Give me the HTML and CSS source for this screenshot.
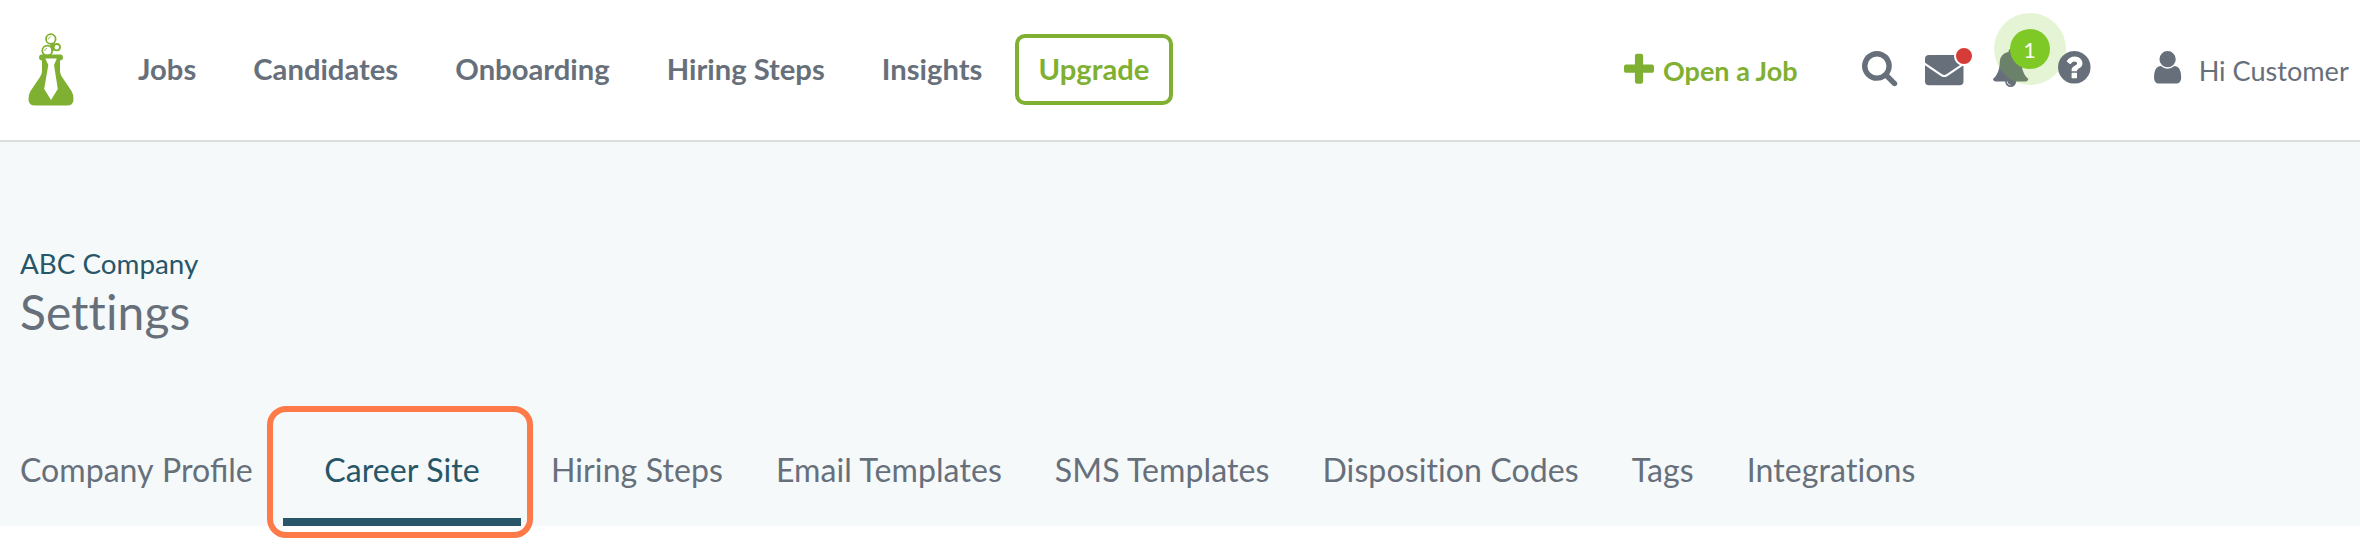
FILE: index.html
```html
<!DOCTYPE html>
<html lang="en">
<head>
<meta charset="utf-8">
<title>Settings</title>
<link rel="stylesheet" href="styles.css">
</head>
<body>
<header class="topbar">
  <svg class="logo" viewBox="0 0 46 73">
    <g fill="#fff" stroke="#80b032" stroke-width="1.8">
      <circle cx="28.8" cy="14.2" r="3.2"/>
      <circle cx="22.8" cy="6" r="4.8"/>
      <circle cx="19.3" cy="17.6" r="5"/>
    </g>
    <path fill="#80b032" d="M22 10.500L26.500 10L26 17L24 20L22.500 14Z"/>
    <path fill="none" stroke="#80b032" stroke-width=".8" d="M20.300 6.500Q20.600 4 22.800 3.600M16.700 18Q17 15.600 19 15.200"/>
    <path fill="#80b032" d="M13 21.500H33Q35 22 35 24.500T32 27.500V38Q32 41 34 44L43.500 58Q46 62 45.500 67Q45 72.500 39 72.500H7Q1 72.500 .5 67Q0 62 2.500 58L12 44Q14 41 14 38V27.500Q11 27 11 24.500T13 21.500Z"/>
    <path fill="#fff" d="M17.300 25.500H28.800L26 32L29.800 56L23 67L16.200 56L20.300 32Z"/>
  </svg>
  <nav class="mainnav">
    <a>Jobs</a><a>Candidates</a><a>Onboarding</a><a>Hiring Steps</a><a>Insights</a>
  </nav>
  <a class="upgrade">Upgrade</a>
  <a class="open-job">
    <svg class="plus" viewBox="192 192 1408 1408"><path d="M1600 736v192q0 40-28 68t-68 28h-416v416q0 40-28 68t-68 28h-192q-40 0-68-28t-28-68v-416h-416q-40 0-68-28t-28-68v-192q0-40 28-68t68-28h416v-416q0-40 28-68t68-28h192q40 0 68 28t28 68v416h416q40 0 68 28t28 68z"/></svg>
    <span>Open a Job</span>
  </a>
  <div class="icons">
    <svg class="search" viewBox="0 0 1664 1664"><path d="M1152 704q0-185-131.500-316.500t-316.500-131.500-316.500 131.500-131.500 316.500 131.500 316.500 316.500 131.500 316.500-131.500 131.500-316.500zm512 832q0 52-38 90t-90 38q-54 0-90-38l-343-342q-179 124-399 124-143 0-273.500-55.500t-225-150-150-225-55.500-273.500 55.500-273.500 150-225 225-150 273.500-55.500 273.500 55.500 225 150 150 225 55.500 273.500q0 220-124 399l343 343q37 37 37 90z"/></svg>
    <span class="mail">
      <svg viewBox="0 0 38.500 30.300"><rect width="38.500" height="30.300" rx="4"/><path d="M-.5 8.700L16.800 20.300Q19.250 21.700 21.700 20.300L39 8.700" fill="none" stroke="#fff" stroke-width="2.200"/></svg>
      <i class="dot"></i>
    </span>
    <span class="bell">
      <svg viewBox="64 0 1664 1792"><path d="M912 1696q0-16-16-16-59 0-101.500-42.500t-42.500-101.500q0-16-16-16t-16 16q0 73 51.500 124.500t124.500 51.500q16 0 16-16zm816-288q0 52-38 90t-90 38h-448q0 106-75 181t-181 75-181-75-75-181h-448q-52 0-90-38t-38-90q50-42 91-88t85-119.500 74.500-158.500 50-206 19.500-260q0-152 117-282.500t307-158.500q-8-19-8-39 0-40 28-68t68-28 68 28 28 68q0 20-8 39 190 28 307 158.500t117 282.500q0 139 19.500 260t50 206 74.500 158.500 85 119.500 91 88z"/></svg>
      <i class="halo"><b>1</b></i>
    </span>
    <svg class="help" viewBox="128 128 1536 1536"><path d="M1024 1376v-192q0-14-9-23t-23-9h-192q-14 0-23 9t-9 23v192q0 14 9 23t23 9h192q14 0 23-9t9-23zm256-672q0-88-55.500-163t-138.500-116-170-41q-243 0-371 213-15 24 8 42l132 100q7 6 19 6 16 0 25-12 53-68 86-92 34-24 86-24 48 0 85.500 26t37.500 59q0 38-20 61t-68 45q-63 28-115.500 86.500t-52.500 125.500v36q0 14 9 23t23 9h192q14 0 23-9t9-23q0-19 21.500-49.500t54.500-49.500q32-18 49-28.500t46-35 44.500-48 28-60.500 12.500-81zm384 192q0 209-103 385.500t-279.500 279.500-385.500 103-385.500-103-279.500-279.500-103-385.500 103-385.500 279.500-279.500 385.500-103 385.500 103 279.500 279.500 103 385.500z"/></svg>
  </div>
  <div class="account">
    <svg class="user" viewBox="256 128 1280 1536"><path d="M1536 1399q0 109-62.500 187t-150.500 78h-854q-88 0-150.500-78t-62.500-187q0-85 8.500-160.500t31.500-152 58.500-131 94-89 134.500-34.500q131 128 313 128t313-128q76 0 134.500 34.500t94 89 58.500 131 31.500 152 8.500 160.500zm-256-887q0 159-112.500 271.500t-271.500 112.500-271.500-112.500-112.500-271.500 112.500-271.500 271.500-112.500 271.500 112.500 112.500 271.500z"/></svg>
    <span>Hi Customer</span>
  </div>
</header>
<main class="page">
  <a class="company">ABC Company</a>
  <h1>Settings</h1>
  <nav class="tabs">
    <a class="first">Company Profile</a><a class="active">Career Site</a><a>Hiring Steps</a><a>Email Templates</a><a>SMS Templates</a><a>Disposition Codes</a><a>Tags</a><a>Integrations</a>
  </nav>
</main>
</body>
</html>
```
FILE: styles.css
```css
* { box-sizing: border-box; }
body {
  margin: 0;
  background: #fff;
  color: #67707a;
  font-family: Lato, "Liberation Sans", sans-serif;
  font-size: 27px;
  font-variant-ligatures: none;
  width: 2360px;
  height: 549px;
  overflow: hidden;
}
svg { display: block; flex: none; fill: currentColor; overflow: visible; }
a, span { white-space: nowrap; }
.topbar {
  display: flex;
  align-items: flex-start;
  height: 142px;
  border-bottom: 2px solid #dcdedd;
}
.logo { width: 46px; height: 73px; margin: 33px 0 0 28px; }
.mainnav {
  display: flex;
  flex: 0 0 877px;
  gap: 57.100px;
  margin: 34px 0 0 64px;
  font-size: 29.200px;
  font-weight: 700;
  line-height: 69px;
}
.upgrade {
  flex: none;
  width: 158px;
  height: 71px;
  margin-top: 34px;
  border: 4px solid #80b032;
  border-radius: 10px;
  color: #80b032;
  font-size: 29.200px;
  font-weight: 700;
  line-height: 61px;
  text-align: center;
}
.open-job {
  display: flex;
  flex: 0 0 175px;
  margin: 55px 0 0 451px;
  color: #80b032;
  font-weight: 700;
  line-height: 31px;
}
.plus { width: 30px; height: 30px; margin-right: 9px; }
.icons { display: flex; flex: none; margin: 51px 0 0 63px; }
.search { width: 35.300px; height: 35.300px; }
.mail { position: relative; margin: 3.600px 0 0 27.700px; }
.mail svg { width: 38.500px; height: 30.300px; }
.dot {
  position: absolute;
  top: -8.600px;
  left: 28.700px;
  width: 20px;
  height: 20px;
  border: 2px solid #fff;
  border-radius: 50%;
  background: #d63c37;
}
.bell { position: relative; margin: -1.600px 0 0 29.500px; }
.bell svg { width: 35.300px; height: 38px; }
.halo {
  position: absolute;
  top: -36.400px;
  left: 0.700px;
  display: flex;
  align-items: center;
  justify-content: center;
  width: 72px;
  height: 72px;
  border-radius: 50%;
  background: rgba(127, 201, 38, .2);
  font-style: normal;
}
.halo b {
  width: 40px;
  height: 40px;
  border-radius: 50%;
  background: #7fc926;
  color: #fff;
  font-size: 21px;
  font-weight: 400;
  line-height: 41px;
  text-align: center;
}
.help { position: relative; width: 32.600px; height: 32.600px; margin-left: 29.400px; }
.account { display: flex; margin: 51px 0 0 63.700px; font-size: 27.100px; line-height: 40px; }
.user { width: 27.200px; height: 32.600px; margin-right: 17.500px; }
.page {
  height: 384px;
  padding: 104px 20px 0;
  background: #f5f9fa;
}
.company { display: block; color: #275669; font-size: 27.800px; line-height: 36px; }
h1 { margin: 0; font-size: 48px; font-weight: 400; line-height: 60px; letter-spacing: .1px; }
.tabs { display: flex; margin-top: 73px; font-size: 32.100px; line-height: 66px; letter-spacing: .08px; }
.tabs a { height: 111px; padding: 22px 0 0; margin-right: 52.900px; }
.tabs .first { width: 233px; margin-right: 0; font-variant-ligatures: normal; letter-spacing: normal; word-spacing: 1px; }
.tabs .active {
  position: relative;
  width: 238px;
  margin: 0 30px;
  border-bottom: 8px solid #275669;
  color: #275669;
  text-align: center;
}
.tabs .active::after {
  content: "";
  position: absolute;
  inset: -9.500px -12px -20px -16px;
  border: 6px solid #ff7a49;
  border-radius: 19px;
}
```
